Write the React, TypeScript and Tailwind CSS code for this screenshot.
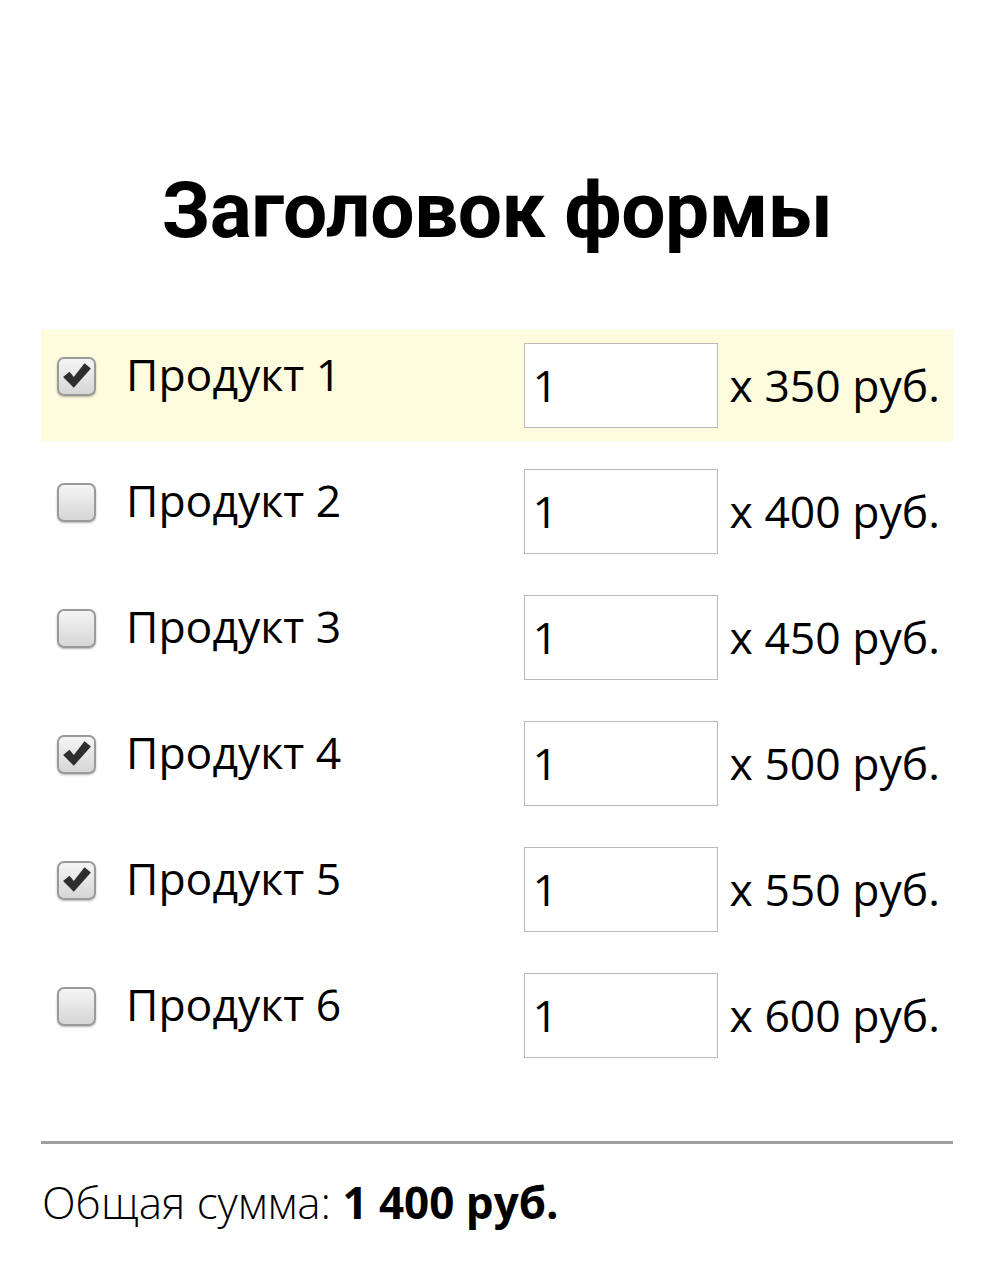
import React, { useState } from 'react';

interface Product {
  id: number;
  name: string;
  price: number;
  checked: boolean;
}

const initial: Product[] = [
  { id: 1, name: 'Продукт 1', price: 350, checked: true },
  { id: 2, name: 'Продукт 2', price: 400, checked: false },
  { id: 3, name: 'Продукт 3', price: 450, checked: false },
  { id: 4, name: 'Продукт 4', price: 500, checked: true },
  { id: 5, name: 'Продукт 5', price: 550, checked: true },
  { id: 6, name: 'Продукт 6', price: 600, checked: false },
];

export default function App() {
  const [items] = useState(initial);

  return (
    <div className="w-[994px] min-h-[1280px] bg-white px-[41px] text-black font-['Open_Sans',sans-serif]">
      <h1 className="pt-[163px] pb-[73px] text-center text-[78.5px] leading-[1.2] font-bold tracking-[-0.5px] font-['Roboto',sans-serif]">
        Заголовок формы
      </h1>

      <div className="flex flex-col gap-[15px]">
        {items.map((p) => (
          <Row key={p.id} product={p} highlight={p.id === 1} />
        ))}
      </div>

      <div className="mt-[70px] h-[3px] bg-[#a0a0a0]" />

      <p className="mt-[30px] text-[44px] leading-[1.3] pl-px">
        <span className="font-light">Общая сумма: </span>
        <span className="font-bold">1 400 руб.</span>
      </p>
    </div>
  );
}

function Row({ product, highlight }: { product: Product; highlight: boolean }) {
  return (
    <div className={`flex items-center h-[111px] pl-4 pr-[13px] ${highlight ? 'bg-[#fdfcdf]' : ''}`}>
      <div className="flex-1 flex items-center gap-[30px] -mt-[19px]">
        <Checkbox checked={product.checked} />
        <span className="text-[44.5px] leading-none -mt-[4px]">{product.name}</span>
      </div>
      <div className="w-[194px] h-[85px] bg-white border border-[#b9b9b9] flex items-center pl-[8px] text-[44.5px] leading-none">
        1
      </div>
      <span className="ml-[12px] text-[44.5px] leading-none">x {product.price} руб.</span>
    </div>
  );
}

function Checkbox({ checked }: { checked: boolean }) {
  return (
    <div className="w-[39px] h-[39px] shrink-0 rounded-[7px] border-2 border-[#9a9a9a] bg-gradient-to-b from-[#f5f5f5] to-[#d6d6d6] shadow-[0_1px_2px_rgba(0,0,0,0.3)] flex items-center justify-center">
      {checked && (
        <svg width="30" height="28" viewBox="0 0 28 26">
          <path d="M1 14 L7 9 L11 14 L21 1 L27 6 L11 24 Z" fill="#2e2e2e" />
        </svg>
      )}
    </div>
  );
}
